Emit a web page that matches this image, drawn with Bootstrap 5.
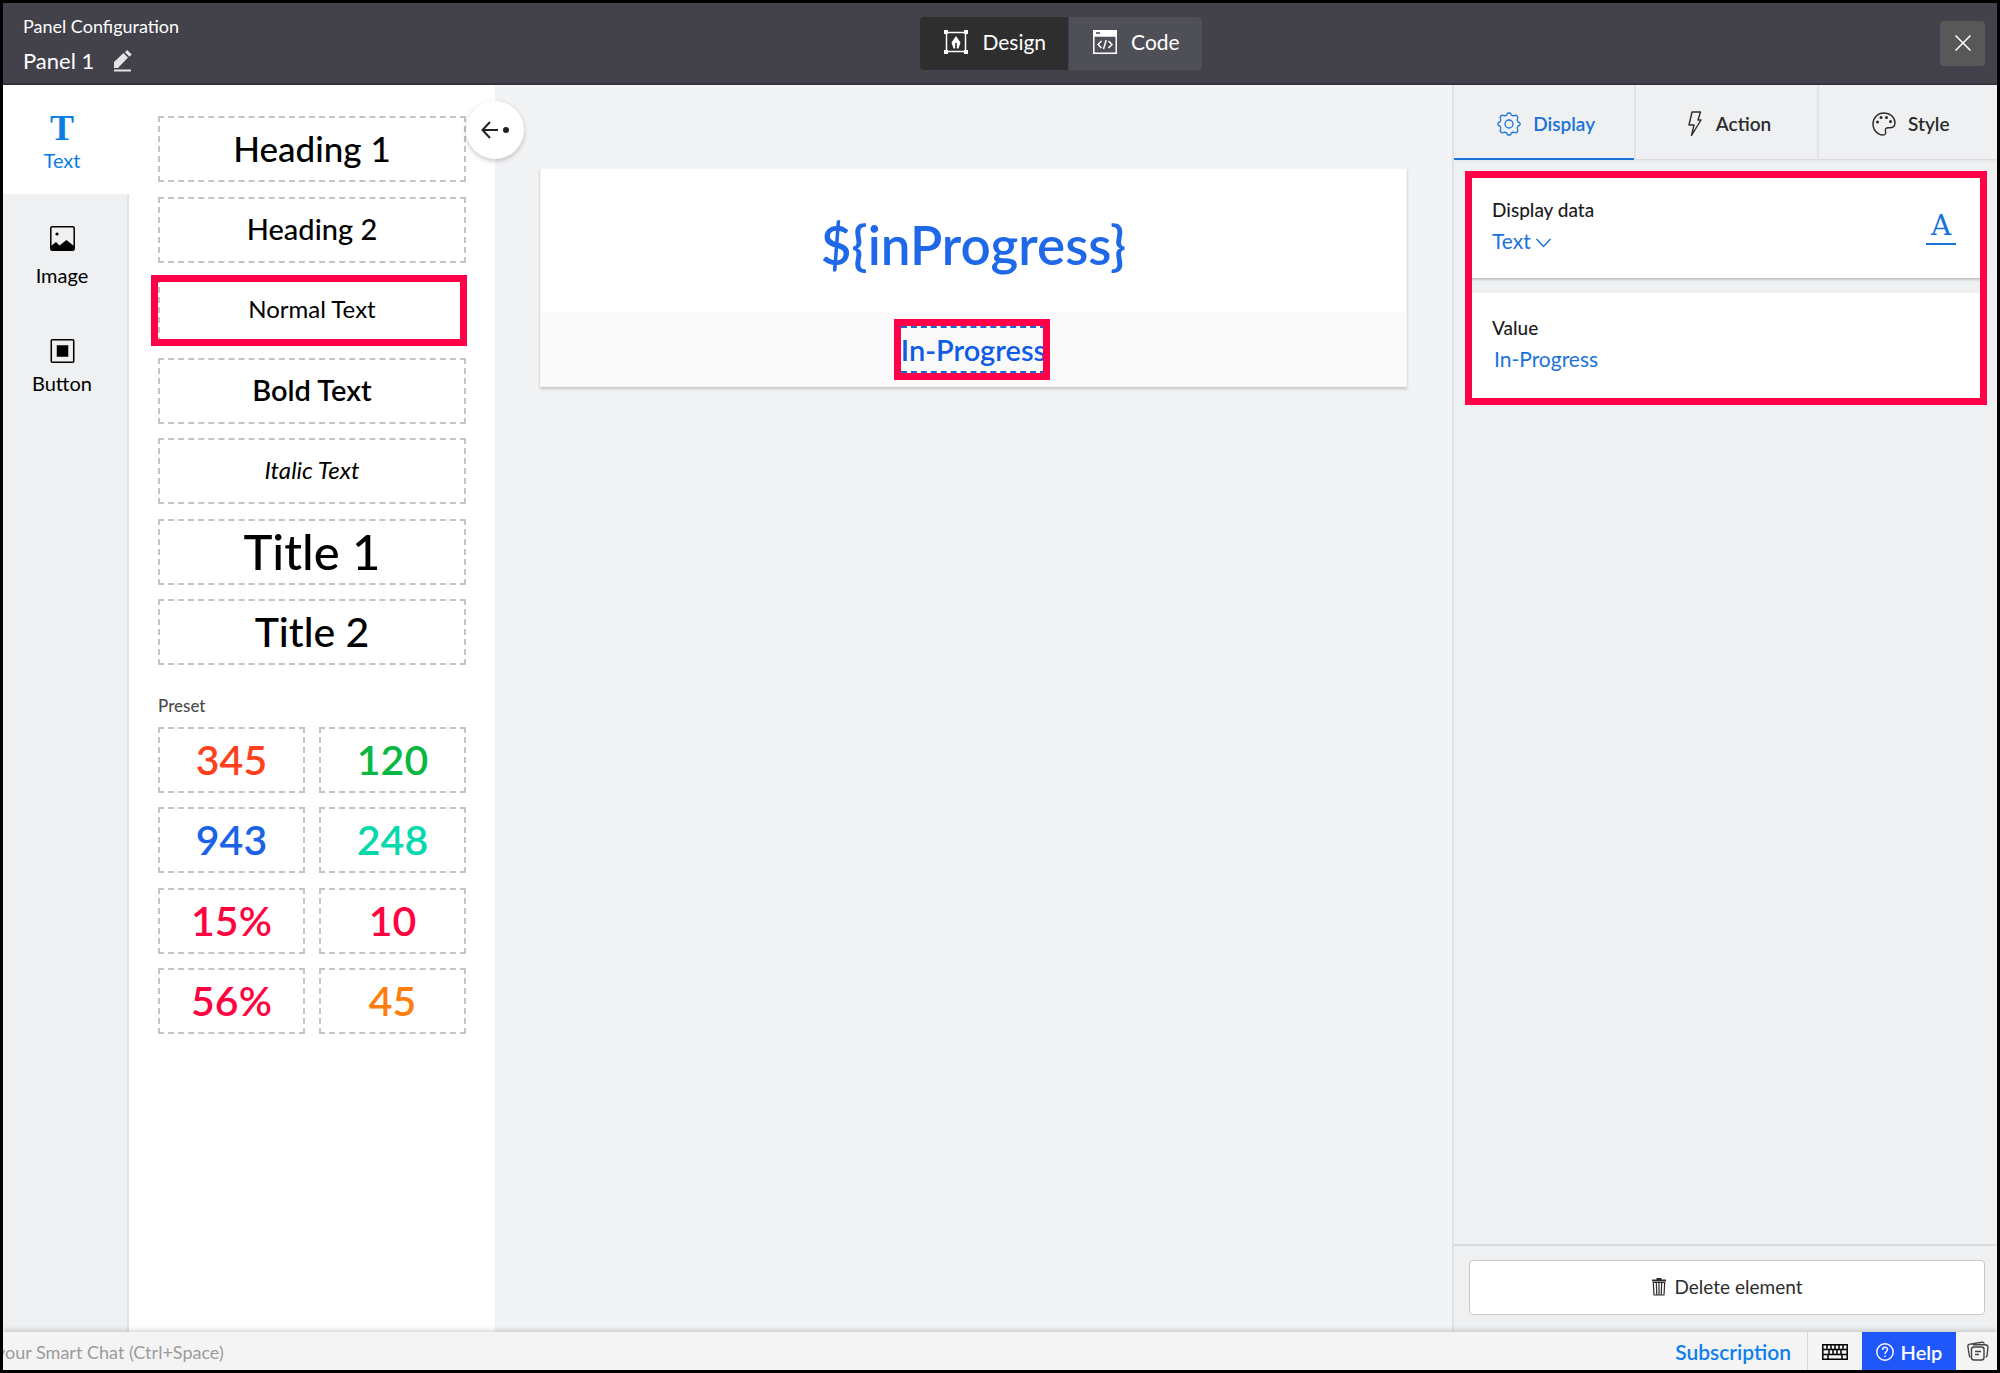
<!DOCTYPE html>
<html lang="en">
<head>
<meta charset="utf-8">
<meta name="viewport" content="width=device-width, initial-scale=1">
<title>Panel Configuration</title>
<link rel="stylesheet" href="https://cdn.jsdelivr.net/npm/bootstrap@5.3.0/dist/css/bootstrap.min.css">
<style>
  body { font-family: Lato, "Liberation Sans", sans-serif; font-size: 20px; line-height: 24px; color: #000; background: #f2f3f5; border: 3px solid #000; height: 100vh; overflow: hidden; }
  button { color: inherit; }
  svg { display: block; flex: none; }

  /* top bar */
  .topbar { background: #43424b; border-bottom: 2px solid #35343e; height: 82px; color: #fff; }
  .topbar-side { flex: 1 1 0; min-width: 0; }
  .crumb { font-size: 18px; line-height: 22px; margin-bottom: 10px; padding-top: 4px; }
  .panel-name { font-size: 22px; line-height: 28px; }
  .modes { margin-left: 114px; }
  .mode { height: 53px; background: #4f4f58; font-size: 21px; border: 0; padding: 0 22px 2px 24px; gap: 14px; border-radius: 0 4px 4px 0; }
  .mode.active { background: #2e2e2e; border-radius: 4px 0 0 4px; margin-right: 1px; }
  .close-btn { width: 45px; height: 45px; background: #585858; border: 0; border-radius: 4px; }

  /* left rail */
  .rail { width: 126px; background: #eff0f2; }
  .rail-item { border: 0; background: none; padding: 0 6px 0 0; width: 100%; }
  .rail-item.active { background: #fff; color: #0b7de3; height: 109px; padding: 0 8px 0 0; }
  .rail-rest { border-right: 2px solid #e2e3e5; }
  .glyph-t { font-family: "Liberation Serif", serif; font-weight: 700; font-size: 36px; line-height: 40px; }

  /* element library */
  .library { width: 366px; background: #fff; padding: 31px 29px 0; position: relative; }
  .tile { height: 66px; border: 2px dashed #c4c4c4; background: #fff; padding: 0 0 2px; position: relative; color: #000; }
  .tiles { height: 549px; }
  .presets { height: 307px; }
  .preset-row { gap: 14px; }
  .presets .tile { flex: 1 1 0; font-size: 41px; font-weight: 600; padding: 0; }
  .preset-title { font-size: 17px; line-height: 24px; color: #4c4c4c; font-weight: 500; margin: 29px 0 9px; }
  .s-h1 { font-size: 35px; font-weight: 500; } .s-h2 { font-size: 29px; font-weight: 500; } .s-n { font-size: 24px; }
  .s-b { font-size: 29px; font-weight: 600; } .s-i { font-size: 24px; font-style: italic; }
  .s-t1 { font-size: 49px; font-weight: 500; } .s-t2 { font-size: 41px; font-weight: 500; padding: 0; }
  .collapse-btn { position: absolute; top: 16px; right: -29px; width: 58px; height: 58px; border: 0; border-radius: 50%; background: #fff; box-shadow: 0 2px 5px rgba(0,0,0,.22); z-index: 2; }

  /* callout frames laid over content */
  .callout { position: absolute; border: 7px solid #ff0049; pointer-events: none; z-index: 1; }
  .callout-tile { inset: -4px -3px -5px -9px; }
  .callout-text { inset: -9px -4px -9px -7px; }
  .callout-form { inset: -4px -2px -5px -4px; }

  /* canvas */
  .stage { padding: 83px 45px 0; }
  .board { background: #fff; border: 1px solid #f4f4f4; box-shadow: 0 2px 3px rgba(0,0,0,.2); }
  .board-top { height: 143px; font-size: 53px; line-height: 64px; font-weight: 600; color: #1f69e8; padding-top: 9px; }
  .board-foot { height: 74px; background: #fafafa; }
  .picked { position: relative; border: 2px dashed #1667d8; border-width: 2px 0; height: 47px; line-height: 43px; font-size: 29px; font-weight: 600; color: #0f5ce6; }

  /* inspector */
  .inspector { width: 545px; background: #eff0f2; border-left: 2px solid #e0e1e3; overflow: hidden; }
  .tabs-row { height: 75px; margin-right: -2px; border-bottom: 1px solid #dcdcde; box-shadow: 0 2px 3px rgba(0,0,0,.04); }
  .tab-btn { flex: 1 1 0; height: 75px; border: 0; border-right: 2px solid #e2e3e5; background: none; font-size: 19px; font-weight: 600; color: #2c2c2c; gap: 12px; padding: 3px 0 0 4px; }
  .tab-btn:last-child { border-right: 0; }
  .tab-btn.active { color: #1a73d9; box-shadow: inset 0 -2px #1a73d9; }
  .inspector-body { padding: 15px 12px 0 15px; }
  .prop { background: #fff; padding: 0 29px 0 23px; }
  .prop-first { height: 103px; box-shadow: 0 1px 3px rgba(0,0,0,.3); }
  .prop-second { height: 107px; margin-top: 15px; padding-bottom: 4px; }
  .prop-label { font-size: 19px; font-weight: 500; line-height: 28px; color: #1c1c1c; display: block; }
  .prop-field { border: 0; background: transparent; padding: 0; font-size: 21px; line-height: 34px; height: 34px; color: #1a73d9; appearance: none; }
  .prop-second .prop-field { padding-left: 2px; }
  .glyph-a { font-family: "DejaVu Serif", serif; font-size: 28px; line-height: 34px; color: #1a73d9; border-bottom: 2px solid #1a73d9; width: 30px; }
  .inspector-foot { border-top: 2px solid #dadbdd; padding: 14px 12px 17px 15px; }
  .delete-btn { height: 55px; background: #fff; border: 1px solid #c8c8c8; border-radius: 4px; color: #2c2c2c; gap: 9px; font-size: 19px; padding-bottom: 2px; }

  /* status bar */
  .statusbar { height: 38px; background: #f4f4f4; box-shadow: 0 -2px 5px rgba(0,0,0,.16); position: relative; z-index: 3; }
  .chat-input { border: 0; background: none; padding: 2px 0 0; text-indent: -7px; font-size: 18px; width: 400px; outline: 0; }
  .chat-input::placeholder { color: #9b9b9b; opacity: 1; }
  .sub-link { color: #0f7fec; font-size: 21px; font-weight: 600; padding: 2px 16px 0 0; }
  .kbd-btn { border: 0; border-left: 1px solid #d8d8d8; background: none; width: 55px; height: 38px; padding: 2px 1px 0 0; }
  .help-btn { border: 0; background: #1f57fb; color: #fff; font-weight: 600; width: 94px; height: 38px; gap: 7px; padding: 2px 0 0; }
  .cards-btn { border: 0; background: none; width: 41px; height: 38px; padding: 0 0 0 3px; }
</style>
<script src="https://cdn.jsdelivr.net/npm/bootstrap@5.3.0/dist/js/bootstrap.bundle.min.js"></script>
</head>
<body class="d-flex flex-column">

<header class="topbar d-flex align-items-center flex-shrink-0">
  <div class="topbar-side ps-3 ms-1">
    <div class="crumb">Panel Configuration</div>
    <div class="d-flex align-items-center panel-name"><span>Panel 1</span>
      <button class="btn p-0 border-0 ms-3" aria-label="Rename panel">
        <svg width="24" height="24" viewBox="0 0 24 24" fill="#e4e4e4"><path d="M4 19v-6L13.500 4l4.500 4.500L8 19zM15 3.200L17.200 1l4.500 4.500-2.200 2.200zM4 20.500h17v2H4z"/></svg>
      </button>
    </div>
  </div>
  <div class="modes d-flex">
    <button class="mode active d-flex align-items-center">
      <svg width="24" height="24" viewBox="0 0 24 24"><path d="M2.500 2.500h19v19h-19z" fill="none" stroke="#fff" stroke-width="1.500"/><path d="M0 0h4v4H0zM20 0h4v4h-4zM0 20h4v4H0zM20 20h4v4h-4zM12 6l4.500 6.500-2 6h-1.700V13h-1.600v5.500H9.500l-2-6z" fill="#fff"/></svg>
      <span>Design</span>
    </button>
    <button class="mode d-flex align-items-center">
      <svg width="24" height="24" viewBox="0 0 24 24" fill="none" stroke="#fff" stroke-width="1.500"><path d="M.8.8h22.400v22.400H.8z"/><path d="M1 1h22v5H1z" fill="#fff"/><path d="M3 3h4" stroke="#43424b"/><path d="M8.500 11L5 14.500 8.500 18M15.500 11l3.500 3.500-3.500 3.500M13.200 10l-2.700 9"/></svg>
      <span>Code</span>
    </button>
  </div>
  <div class="topbar-side d-flex justify-content-end pe-2 me-1">
    <button class="close-btn d-flex align-items-center justify-content-center" aria-label="Close"><svg width="16" height="16" viewBox="0 0 16 16" stroke="#fff" stroke-width="1.500"><path d="M.5.5l15 15M15.500.5l-15 15"/></svg></button>
  </div>
</header>

<main class="d-flex flex-grow-1" style="min-height:0">
  <nav class="rail d-flex flex-column flex-shrink-0" aria-label="Element types">
    <button class="rail-item active d-flex flex-column align-items-center justify-content-center"><span class="glyph-t">T</span><span>Text</span></button>
    <div class="rail-rest flex-grow-1 pt-2">
      <button class="rail-item d-flex flex-column align-items-center pt-4">
        <svg width="25" height="25" viewBox="0 0 25 25"><rect x=".8" y=".8" width="23.400" height="23.400" rx="1.500" fill="none" stroke="#000" stroke-width="1.500"/><circle cx="7" cy="8" r="1.600"/><path d="M1 20l5-4 3.500 3.500L16.500 14l7.500 6v4H1z"/></svg>
        <span class="mt-2 pt-1">Image</span>
      </button>
      <button class="rail-item d-flex flex-column align-items-center pt-5">
        <svg class="mt-1" width="25" height="24" viewBox="0 0 25 25"><rect x=".8" y=".8" width="23.400" height="23.400" rx="1" fill="none" stroke="#000" stroke-width="1.600"/><path d="M6.500 6.500h12v12h-12z"/></svg>
        <span class="mt-2">Button</span>
      </button>
    </div>
  </nav>

  <section class="library flex-shrink-0">
    <div class="tiles d-flex flex-column justify-content-between">
      <button class="tile s-h1">Heading 1</button>
      <button class="tile s-h2">Heading 2</button>
      <button class="tile s-n">Normal Text<span class="callout callout-tile"></span></button>
      <button class="tile s-b">Bold Text</button>
      <button class="tile s-i">Italic Text</button>
      <button class="tile s-t1">Title 1</button>
      <button class="tile s-t2">Title 2</button>
    </div>
    <h2 class="preset-title">Preset</h2>
    <div class="presets d-flex flex-column justify-content-between">
      <div class="preset-row d-flex"><button class="tile" style="color:#ff401c">345</button><button class="tile" style="color:#08b842">120</button></div>
      <div class="preset-row d-flex"><button class="tile" style="color:#1a62e6">943</button><button class="tile" style="color:#04d8ac">248</button></div>
      <div class="preset-row d-flex"><button class="tile" style="color:#ff0340">15%</button><button class="tile" style="color:#ff0340">10</button></div>
      <div class="preset-row d-flex"><button class="tile" style="color:#ff0340">56%</button><button class="tile" style="color:#ff7d0c">45</button></div>
    </div>
    <button class="collapse-btn d-flex align-items-center justify-content-center p-0" aria-label="Collapse"><svg width="28" height="18" viewBox="0 0 28 18" fill="none" stroke="#222" stroke-width="2"><path d="M9 1L1.500 9 9 17M1.500 9H17"/><circle cx="25" cy="9" r="3" fill="#222" stroke="none"/></svg></button>
  </section>

  <section class="stage flex-grow-1">
    <div class="board">
      <div class="board-top d-flex align-items-center justify-content-center">${inProgress}</div>
      <div class="board-foot d-flex align-items-center justify-content-center"><span class="picked">In-Progress<span class="callout callout-text"></span></span></div>
    </div>
  </section>

  <aside class="inspector d-flex flex-column flex-shrink-0">
    <div class="tabs-row d-flex flex-shrink-0">
      <button class="tab-btn active d-flex align-items-center justify-content-center">
        <svg width="24" height="24" viewBox="0 0 24 24" fill="none" stroke="#1a73d9" stroke-width="1.300" stroke-linejoin="round"><circle cx="12" cy="12" r="4"/><path d="M9.800 3Q10.200 1 11 1h2q.8 0 1.200 2 1.500 1 3 .7 1.500-1 2.200-.4l1.300 1.400q.7.700-.4 2.300-.3 1.500.7 3 2 .4 2 1.200v1.600q0 .8-2 1.200-1 1.500-.7 3 1.100 1.600.4 2.300l-1.300 1.400q-.7.600-2.200-.4-1.500-.3-3 .7-.4 2-1.200 2h-2q-.8 0-1.200-2-1.500-1-3-.7-1.500 1-2.200.4l-1.300-1.400q-.7-.7.400-2.300.3-1.500-.7-3-2-.4-2-1.200v-1.600q0-.8 2-1.200 1-1.500.7-3Q2.600 5.400 3.300 4.700l1.300-1.400q.7-.6 2.200.4 1.500.3 3-.7z"/></svg>
        <span>Display</span></button>
      <button class="tab-btn d-flex align-items-center justify-content-center">
        <svg width="18" height="26" viewBox="0 0 18 26" fill="none" stroke="#2c2c2c" stroke-width="1.400" stroke-linejoin="round"><path d="M6 1h8.500l-2.500 8h3L5.500 24.500 8 14H3z"/></svg>
        <span>Action</span></button>
      <button class="tab-btn d-flex align-items-center justify-content-center">
        <svg width="24" height="24" viewBox="0 0 24 24" fill="none" stroke="#2c2c2c" stroke-width="1.400"><path d="M12 1C5.500 1 1 6 1 12s4.500 11 10 11c2.500 0 3-1.500 2.500-3.500-.6-2.500.5-4 3-3.800 4 .5 6.500-1.200 6.500-4.700C23 5 18 1 12 1z"/><g fill="#2c2c2c" stroke="none"><circle cx="5.500" cy="10" r="1.500"/><circle cx="9" cy="5.500" r="1.500"/><circle cx="14.500" cy="5.500" r="1.500"/><circle cx="18.500" cy="9.500" r="1.500"/></g></svg>
        <span>Style</span></button>
    </div>
    <div class="inspector-body flex-grow-1">
      <div class="position-relative">
        <div class="prop prop-first d-flex align-items-center justify-content-between">
          <div>
            <label class="prop-label" for="kind">Display data</label>
            <div class="d-flex align-items-center gap-1">
              <select class="prop-field" id="kind"><option>Text</option></select>
              <svg class="mt-1" width="17" height="10" viewBox="0 0 16 10" fill="none" stroke="#1a73d9" stroke-width="1.400"><path d="M1 1l7 7.500L15 1"/></svg>
            </div>
          </div>
          <button class="glyph-a p-0 bg-transparent border-top-0 border-start-0 border-end-0" aria-label="Text format">A</button>
        </div>
        <div class="prop prop-second d-flex flex-column justify-content-center">
          <label class="prop-label" for="value">Value</label>
          <input class="prop-field" id="value" value="In-Progress">
        </div>
        <span class="callout callout-form"></span>
      </div>
    </div>
    <div class="inspector-foot">
      <button class="delete-btn w-100 d-flex align-items-center justify-content-center">
        <svg width="14" height="18" viewBox="0 0 14 18" fill="none" stroke="#2c2c2c" stroke-width="1.200"><path d="M0 2.500h14M4.500 1h5" stroke-width="2"/><path d="M1.300 4.500L2 17h10l.7-12.500zM4.300 5l.5 12M7 5v12M9.700 5l-.5 12"/></svg>
        <span>Delete element</span></button>
    </div>
  </aside>
</main>

<footer class="statusbar d-flex align-items-center flex-shrink-0">
  <input class="chat-input" aria-label="Smart Chat" placeholder="your Smart Chat (Ctrl+Space)">
  <a class="sub-link ms-auto text-decoration-none" href="#">Subscription</a>
  <button class="kbd-btn d-flex align-items-center justify-content-center" aria-label="Keyboard shortcuts"><svg width="26" height="16" viewBox="0 0 26 16" fill="none" stroke="#000" stroke-width="1.500"><path d="M.8.8h24.400v14.400H.8zM1 5.500h24M1 10.500h24M5 1v4.500M9 1v4.500M13 1v4.500M17 1v4.500M21 1v4.500M7 5.500v5M11 5.500v5M15 5.500v5M19 5.500v5M6 10.500V15M20 10.500V15"/></svg></button>
  <button class="help-btn d-flex align-items-center justify-content-center"><svg width="18" height="18" viewBox="0 0 18 18" fill="none" stroke="#fff" stroke-width="1.400"><circle cx="9" cy="9" r="8.200"/><path d="M6.500 7c0-3.500 5-3.500 5-.5 0 2-2.500 2-2.500 4.500M9 12.500V14"/></svg><span>Help</span></button>
  <button class="cards-btn d-flex align-items-center justify-content-center" aria-label="Recent items"><svg width="22" height="20" viewBox="0 0 22 20" fill="none" stroke="#444" stroke-width="1.400"><rect x="4.500" y="6" width="12.500" height="13" rx="2.500"/><path d="M3.500 16.500Q2.500 16 2.200 14L.9 5.500C.7 4 1.500 3.300 3 3.100L15 1.200c1.500-.2 2 .3 2.200 1.500M6 3.800h12c2 0 3 .7 2.900 2.500l-.8 8q-.2 1.500-1.500 2M8 10.500h6M8 13.500h4"/></svg></button>
</footer>
</body>
</html>
